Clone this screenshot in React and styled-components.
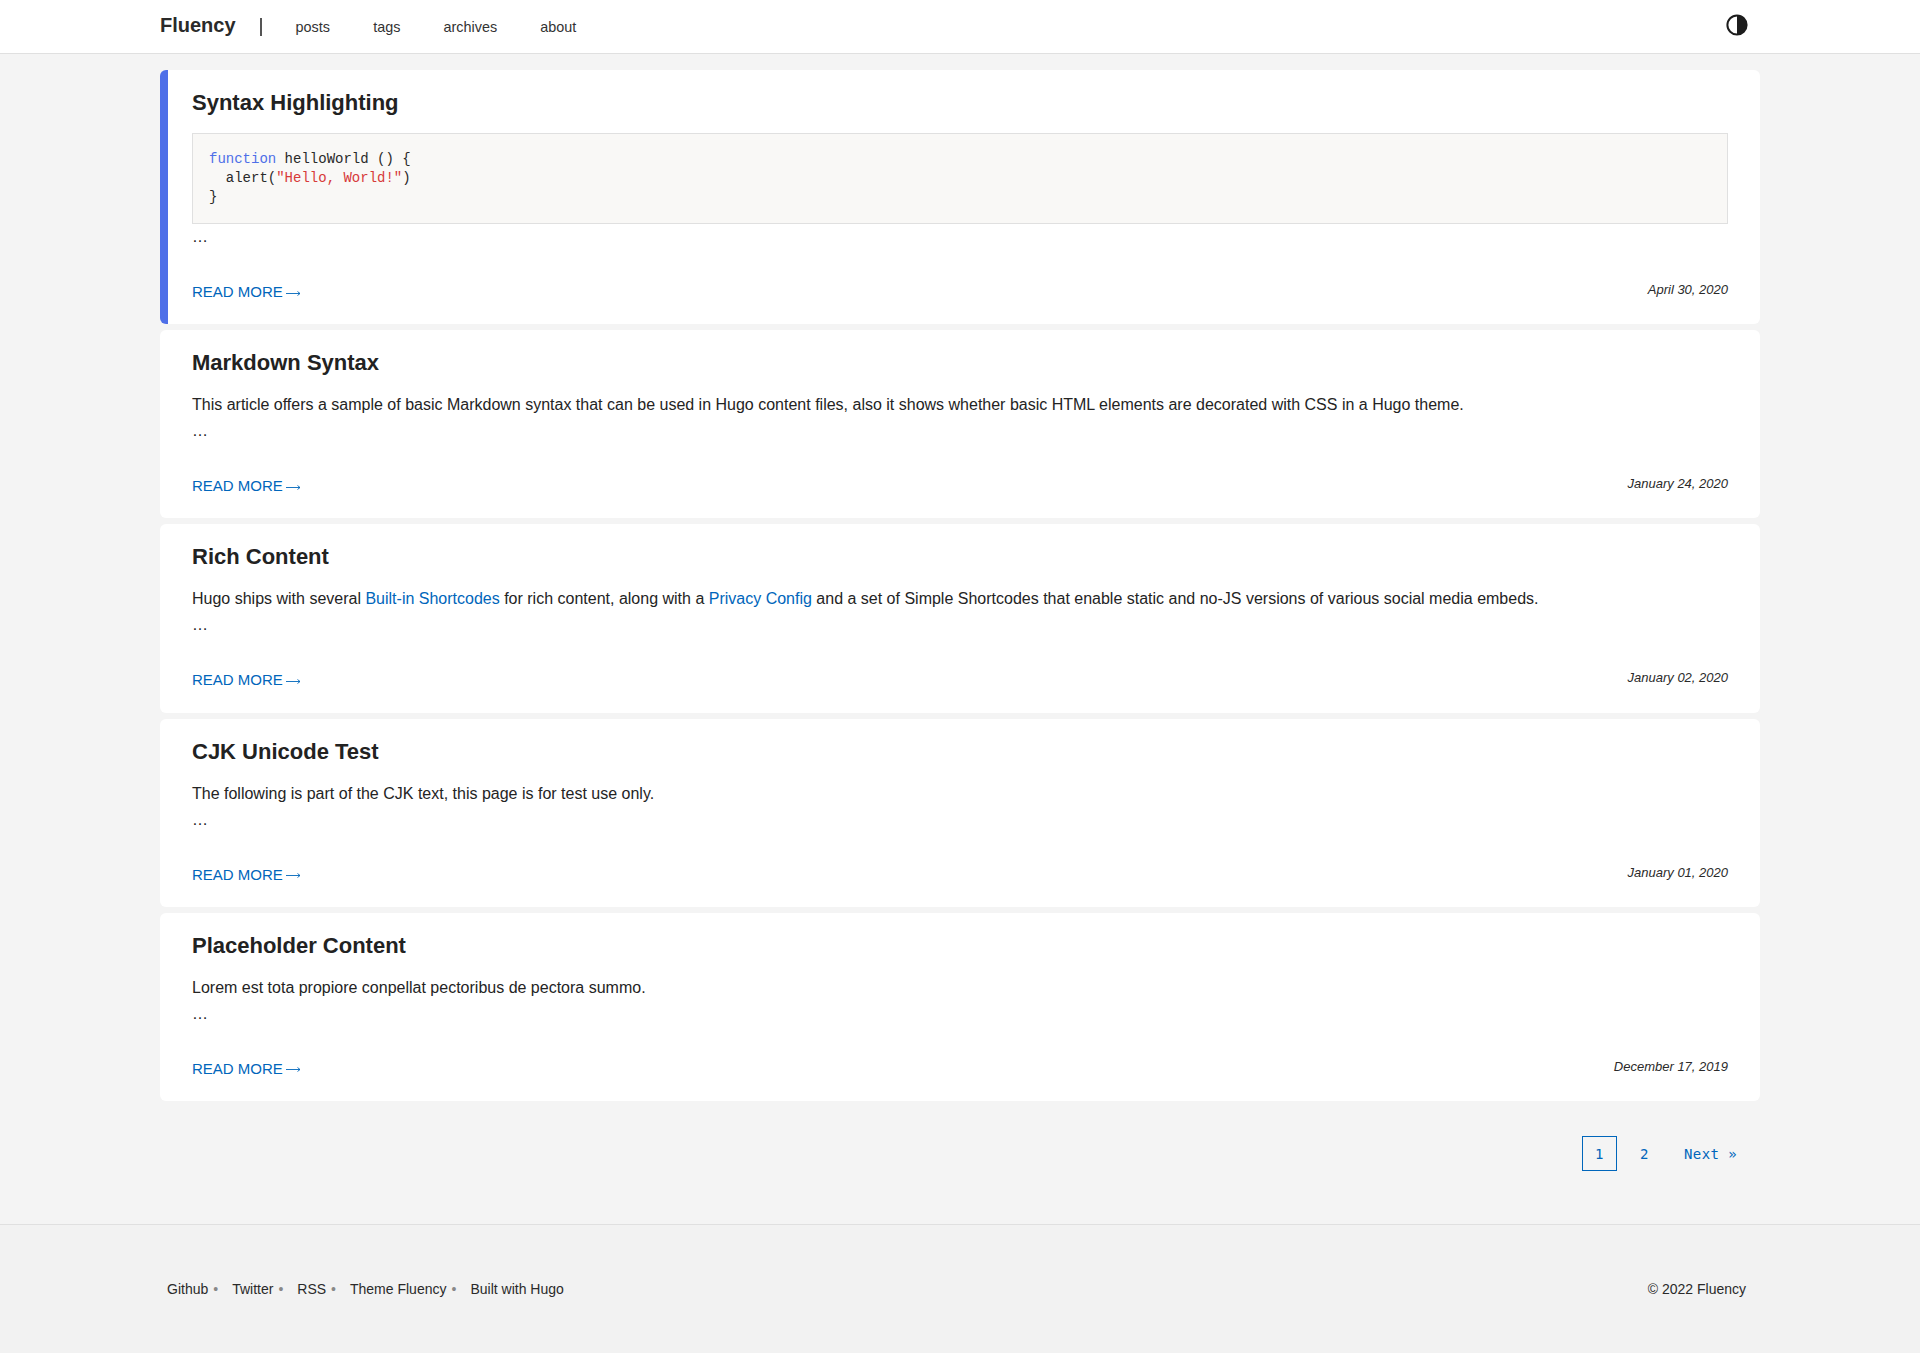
import styled, { createGlobalStyle } from "styled-components"

const GlobalStyle = createGlobalStyle`
  html, body { margin: 0; padding: 0; }
  body {
    background: #f4f4f4;
    color: #242424;
    font-family: "Liberation Sans", Arial, sans-serif;
    font-size: 16px;
  }
  a { text-decoration: none; color: inherit; }
`

const posts = [
  { title: "Syntax Highlighting", date: "April 30, 2020", code: true },
  {
    title: "Markdown Syntax",
    date: "January 24, 2020",
    text: "This article offers a sample of basic Markdown syntax that can be used in Hugo content files, also it shows whether basic HTML elements are decorated with CSS in a Hugo theme.",
  },
  {
    title: "Rich Content",
    date: "January 02, 2020",
    text: (
      <>
        Hugo ships with several <BlueLink href="#">Built-in Shortcodes</BlueLink> for rich content, along with a{" "}
        <BlueLink href="#">Privacy Config</BlueLink> and a set of Simple Shortcodes that enable static and no-JS versions of various social media embeds.
      </>
    ),
  },
  {
    title: "CJK Unicode Test",
    date: "January 01, 2020",
    text: "The following is part of the CJK text, this page is for test use only.",
  },
  {
    title: "Placeholder Content",
    date: "December 17, 2019",
    text: "Lorem est tota propiore conpellat pectoribus de pectora summo.",
  },
]

function BlueLink(props) {
  return <InlineLink {...props} />
}

const ContrastIcon = () => (
  <svg width="22" height="22" viewBox="0 0 22 22">
    <circle cx="11" cy="11" r="9.6" fill="none" stroke="#1d1d1d" strokeWidth="2" />
    <path d="M11 1.4a9.6 9.6 0 0 1 0 19.2z" fill="#1d1d1d" />
  </svg>
)

const ArrowIcon = () => (
  <svg width="15" height="7" viewBox="0 0 15 7">
    <path d="M0 3.5h14M11.5 1.5l2.5 2-2.5 2" fill="none" stroke="#0066bb" strokeWidth="0.9" />
  </svg>
)

const App = () => {
  return (
    <>
      <GlobalStyle />
      <Header>
        <HeaderInner>
          <Logo href="#">Fluency</Logo>
          <Divider />
          <Nav>
            <NavLink href="#">posts</NavLink>
            <NavLink href="#">tags</NavLink>
            <NavLink href="#">archives</NavLink>
            <NavLink href="#">about</NavLink>
          </Nav>
          <ThemeToggle>
            <ContrastIcon />
          </ThemeToggle>
        </HeaderInner>
      </Header>

      <Main>
        {posts.map((post) => (
          <Card key={post.title} $accent={post.code}>
            <Title>{post.title}</Title>
            {post.code ? (
              <CodeBlock>
                <Keyword>function</Keyword> helloWorld () {"{"}
                {"\n"}  alert(<Str>"Hello, World!"</Str>)
                {"\n"}
                {"}"}
              </CodeBlock>
            ) : (
              <Summary>{post.text}</Summary>
            )}
            <Ellipsis>…</Ellipsis>
            <CardFooter>
              <ReadMore href="#">
                READ MORE
                <ArrowIcon />
              </ReadMore>
              <PostDate>{post.date}</PostDate>
            </CardFooter>
          </Card>
        ))}

        <Pagination>
          <PageLink href="#" $active>1</PageLink>
          <PageLink href="#">2</PageLink>
          <PageLink href="#" $next>Next »</PageLink>
        </Pagination>
      </Main>

      <Footer>
        <FooterInner>
          <FooterLinks>
            <FooterItem $dot>Github</FooterItem>
            <FooterItem $dot>Twitter</FooterItem>
            <FooterItem $dot>RSS</FooterItem>
            <FooterItem $dot>Theme Fluency</FooterItem>
            <FooterItem>Built with Hugo</FooterItem>
          </FooterLinks>
          <Copyright>© 2022 Fluency</Copyright>
        </FooterInner>
      </Footer>
    </>
  )
}

const InlineLink = styled.a`
  color: #0066bb;
`

const Header = styled.header`
  height: 53px;
  background: #fff;
  border-bottom: 1px solid #e0e0e0;
`

const HeaderInner = styled.div`
  width: 1600px;
  height: 100%;
  margin: 0 auto;
  display: flex;
  align-items: center;
`

const Logo = styled.a`
  font-size: 20px;
  font-weight: 700;
  color: #2a2a2a;
  position: relative;
  top: -1px;
`

const Divider = styled.span`
  width: 2px;
  height: 18px;
  margin-left: 24px;
  background: #555;
`

const Nav = styled.nav`
  display: flex;
  gap: 43.2px;
  margin-left: 34px;
`

const NavLink = styled.a`
  font-size: 14.4px;
  color: #333;
`

const ThemeToggle = styled.div`
  margin-left: auto;
  margin-right: 12px;
  display: flex;
  position: relative;
  top: -2px;
`

const Main = styled.main`
  width: 1600px;
  margin: 16px auto 0;
`

const Card = styled.article`
  background: #fff;
  border-radius: 6px;
  padding: 20px 32px 22.2px;
  margin-bottom: 6px;
  border-left: ${(p) => (p.$accent ? "8px solid #4e6fe8" : "none")};
  padding-left: ${(p) => (p.$accent ? "24px" : "32px")};
`

const Title = styled.h2`
  margin: 0;
  font-size: 22px;
  line-height: 26px;
  font-weight: 700;
  color: #222;
`

const Summary = styled.p`
  margin: 15px 0 0;
  font-size: 16px;
  line-height: 27px;
`

const CodeBlock = styled.pre`
  margin: 17px 0 0;
  padding: 16px;
  height: 91px;
  box-sizing: border-box;
  background: #f9f8f6;
  border: 1px solid #e0e0e0;
  font-family: "Liberation Mono", monospace;
  font-size: 14px;
  line-height: 19px;
  color: #2a2a2a;
`

const Keyword = styled.span`
  color: #4e6fe8;
`

const Str = styled.span`
  color: #d73a3a;
`

const Ellipsis = styled.div`
  font-size: 16px;
  line-height: 26px;
`

const CardFooter = styled.div`
  display: flex;
  justify-content: space-between;
  align-items: flex-start;
  margin-top: 32px;
`

const ReadMore = styled.a`
  display: inline-flex;
  align-items: center;
  gap: 3px;
  font-size: 15px;
  line-height: 20px;
  color: #0066bb;

  svg {
    margin-top: 2px;
  }
`

const PostDate = styled.time`
  font-size: 13px;
  font-style: italic;
  color: #2a2a2a;
`

const Pagination = styled.nav`
  display: flex;
  justify-content: flex-end;
  align-items: center;
  margin-top: 35px;
  padding-right: 14px;
  height: 36px;
`

const PageLink = styled.a`
  display: flex;
  align-items: center;
  justify-content: center;
  box-sizing: border-box;
  height: 35px;
  min-width: 35px;
  padding: 0 8px;
  margin-left: ${(p) => (p.$next ? "13px" : "10px")};
  font-family: "DejaVu Sans Mono", monospace;
  font-size: 14px;
  letter-spacing: 0.4px;
  color: #0066bb;
  border: 1px solid ${(p) => (p.$active ? "#0066bb" : "transparent")};
`

const Footer = styled.footer`
  margin-top: 52px;
  border-top: 1px solid #e0e0e0;
  background: #f2f2f2;
  height: 128px;
`

const FooterInner = styled.div`
  width: 1600px;
  margin: 0 auto;
  padding: 56px 14px 0 7px;
  box-sizing: border-box;
  display: flex;
  justify-content: space-between;
  font-size: 14px;
  color: #2a2a2a;
`

const FooterLinks = styled.div`
  display: flex;
`

const FooterItem = styled.a`
  margin-right: 14px;
  &::after {
    content: ${(p) => (p.$dot ? '"•"' : "none")};
    color: #888;
    font-size: 14px;
    margin-left: 5px;
  }
`

const Copyright = styled.span``

export default App
